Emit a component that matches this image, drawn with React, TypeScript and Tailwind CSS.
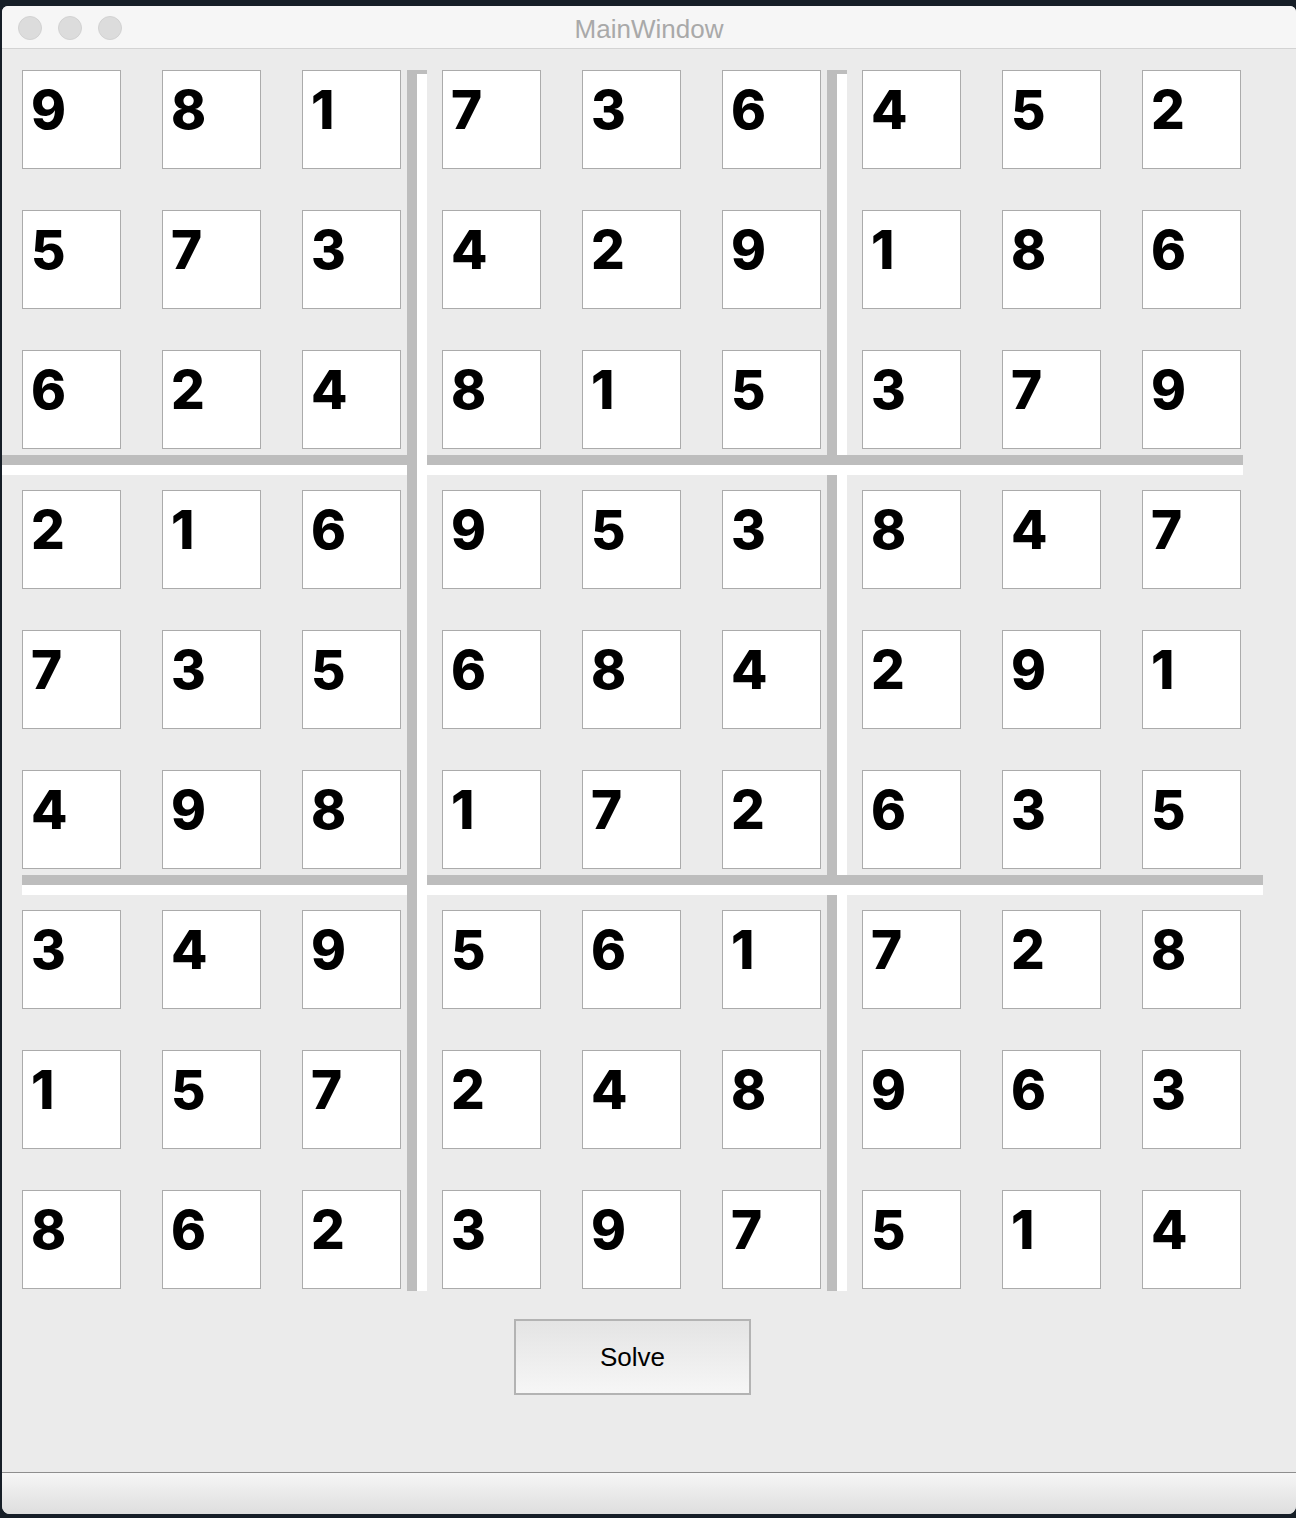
const board: number[][] = [
  [9, 8, 1, 7, 3, 6, 4, 5, 2],
  [5, 7, 3, 4, 2, 9, 1, 8, 6],
  [6, 2, 4, 8, 1, 5, 3, 7, 9],
  [2, 1, 6, 9, 5, 3, 8, 4, 7],
  [7, 3, 5, 6, 8, 4, 2, 9, 1],
  [4, 9, 8, 1, 7, 2, 6, 3, 5],
  [3, 4, 9, 5, 6, 1, 7, 2, 8],
  [1, 5, 7, 2, 4, 8, 9, 6, 3],
  [8, 6, 2, 3, 9, 7, 5, 1, 4],
];

const Cell = ({ value }: { value: number }) => (
  <div className="w-[99px] h-[99px] bg-white border border-[#ababab] pl-[8px] pt-[13px]">
    <span className="block text-[53px] leading-none font-extrabold text-black font-['Inter',sans-serif]">
      {value}
    </span>
  </div>
);

const VLine = ({ left }: { left: string }) => (
  <div
    className={`absolute top-[21px] ${left} w-[20px] h-[1221px] bg-white border-l-[10px] border-t-4 border-[#bdbdbd]`}
  />
);

export default function App() {
  return (
    <div className="min-h-[1518px] bg-[#161e27] pt-[6px] pl-[2px] font-['Liberation_Sans',Arial,sans-serif]">
      <div className="w-[1294px] h-[1508px] flex flex-col rounded-t-[6px] rounded-b-[8px] overflow-hidden bg-[#ebebeb]">
        {/* title bar */}
        <div className="relative h-[43px] shrink-0 bg-[#f6f6f6] border-b border-[#d3d3d3] flex items-center justify-center pt-[3px]">
          <div className="absolute left-[16px] top-[10px] flex gap-4">
            <span className="w-6 h-6 rounded-full bg-[#dcdcdc] border border-[#d2d2d2]" />
            <span className="w-6 h-6 rounded-full bg-[#dcdcdc] border border-[#d2d2d2]" />
            <span className="w-6 h-6 rounded-full bg-[#dcdcdc] border border-[#d2d2d2]" />
          </div>
          <span className="text-[26px] text-[#a9a9a9] leading-none">MainWindow</span>
        </div>

        {/* central widget */}
        <div className="relative flex-1 pl-[20px] pt-[21px]">
          <div className="grid grid-cols-[repeat(9,99px)] gap-[41px]">
            {board.flat().map((v, i) => (
              <Cell key={i} value={v} />
            ))}
          </div>

          <VLine left="left-[825px]" />
          <div className="absolute left-0 top-[406px] w-[1241px] h-[20px] bg-white border-t-[10px] border-[#bdbdbd]" />
          <div className="absolute left-[20px] top-[826px] w-[1241px] h-[20px] bg-white border-t-[10px] border-[#bdbdbd]" />
          <VLine left="left-[405px]" />

          <div className="mt-[30px] ml-[492px] w-[237px] h-[76px] border-2 border-[#b3b3b3] bg-gradient-to-b from-[#e4e4e4] to-[#f6f6f6] flex items-center justify-center">
            <span className="text-[26px] text-black leading-none">Solve</span>
          </div>
        </div>

        {/* status bar */}
        <div className="h-[42px] shrink-0 border-t border-[#8e8e8e] bg-gradient-to-b from-[#f6f6f6] to-[#dedede]" />
      </div>
    </div>
  );
}
